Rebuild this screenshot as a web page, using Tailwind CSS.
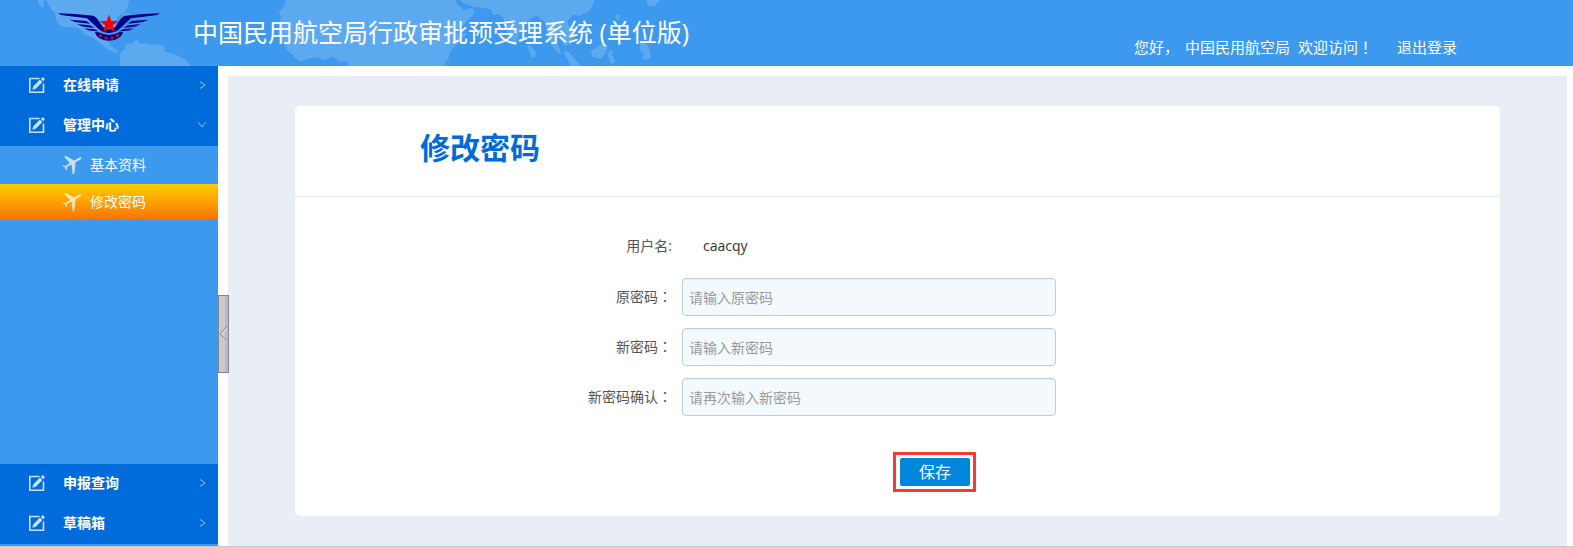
<!DOCTYPE html>
<html lang="zh-CN">
<head>
    <meta charset="UTF-8">
    <meta name="viewport" content="width=device-width, initial-scale=1.0">
    <title>中国民用航空局行政审批预受理系统 (单位版)</title>
    <script src="https://cdn.jsdelivr.net/npm/@tailwindcss/browser@4"></script>
</head>
<body class="flex flex-col min-h-screen bg-white border-b border-[#c8c8c8] font-['Open_Sans','Noto_Sans_CJK_SC',sans-serif] text-sm text-[#555]">

    <!-- shared icons -->
    <svg class="hidden">
        <symbol id="edit" viewBox="0 0 16 16">
            <path d="M10.500 1.500H.8v13.700h13.700V6.500" fill="none" stroke="currentColor" stroke-width="1.600"/>
            <path d="M3.300 12.700l1-3.500 6.600-6.600 2.500 2.500-6.600 6.600zM11.800 1.800l1.400-1.400q.8-.5 1.800.5t.5 1.800L14.200 4.200z" fill="currentColor"/>
        </symbol>
        <symbol id="plane" viewBox="0 0 20 20">
            <path d="M19.300 2.700c.4.900-.4 1.500-1.400 2l-4.300 2.600-1.200 11.500-1.700.6-1.100-9.800-4.600 2.400.1 2.600-1 .4-1.300-2.700L.3 11l.8-.7 2.500.7 4.300-2.900L2.200 1.900 3.700.8l8.500 4.600 4.300-2.500c1-.5 2.400-1.100 2.800-.2z" fill="currentColor"/>
        </symbol>
        <symbol id="right" viewBox="0 0 8 8">
            <path d="M2 .5L7 4 2 7.500" fill="none" stroke="currentColor"/>
        </symbol>
        <symbol id="down" viewBox="0 0 8 8">
            <path d="M.5 1.500L4 6l3.500-4.500" fill="none" stroke="currentColor"/>
        </symbol>
    </svg>

    <header class="relative flex h-[66px] shrink-0 bg-[#3c99ed] text-white overflow-hidden">
        <!-- world map backdrop -->
        <svg class="absolute left-0 top-0" width="700" height="66" viewBox="0 0 700 66" fill="#5ca9f0">
            <path d="M38 0l1 4 3 4 2-1-1-4 1-3z"/>
            <path d="M46 0l5 9 4 4 2 9 4 4 7 1 11 1 6 7 7 2 8 6 7 6 6 3 5 1-1-3-5-3-4-6-5-1-4-5 3-6 3-3 7-1 3 5 2-1-2-8 5-6 5-3 3-5 1-7z"/>
            <path d="M106 9l6-2 8 3 4 3-5 0-6-3-5 1zM122 14l6-1 3 2-5 3z"/>
            <path d="M120 66V53l4-3 2-6 7-1 4-4 3 5 6-1 4 2 8-1 6 2 1 6 7 1 6 3 8 4 5 6z"/>
            <path d="M286 0l-2 7-5 4 2 7-2 6-1 10 5 9 5 8 12 11 7-3 11-2 6 3 9-3 7 5 8-1v5h96l4-7 3-9 8-8 8-9-9 0-6-2-6-9-7-13-4-9-9-4z"/>
            <path d="M419 0l6 9 8 15 4 9 9 0 9-4 9-4 5-6 6-6-3-5-8 2-6-5-3-5z"/>
            <path d="M459 0l5 3 9 4 12 1 6 2 2 5 6-1 4 4 4 12 5 13 4 3 3-12 5-9 9-8 5-1 2 3 4 2 2 7 3 9 3 9 6 7 3 1-3-9-2-9 4 3 5 7 5-2 4-6-3-9-4-7 4-5 3-2 6 1 9-5 5-8V0z"/>
            <path d="M527 45l4 1 5 7-1 4-3 1-2-5zM563 51l6 1 8 9 3 5h-9zM591 51l12-8 5 3-3 8-5 5-8-2zM607 53l6-3-1 5 3 6-4 4-2-7zM640 43l5-1 4 6 2 8-3 4-6-2 2-4-4-4zM646 0l2 6 7 0 5-6zM615 17l3-3 2 3-2 4z"/>
        </svg>

        <!-- winged emblem -->
        <svg class="absolute left-[57px] top-3" width="104" height="30" viewBox="0 0 104 30">
            <path id="wing" d="M1 1.200Q18 1.200 36 3.700q3 1 5 4l5 7.500 6 2.300v3.500q-7-.5-11-4.500L30 6.200Q14 4.500 4 3zM12.500 7.800l17 1.200 3.500 2.800-15-1.800zM20 12l14 1.500 3.500 2.500-12-1.500zM27 16.200l11 1 4 2.300-10-1zM38 20.200l4 .3q10 5 20 0l4-.3q-3 8.300-14 8.300t-14-8.300z" fill="#00008b"/>
            <use href="#wing" transform="matrix(-1 0 0 1 104 0)"/>
            <path d="M52 2.500l2.300 6.500h7.200l-5.700 4.200 2.100 7-5.900-4.200-5.900 4.200 2.100-7-5.700-4.200h7.200z" fill="#f00"/>
            <g fill="#f00"><circle cx="43.500" cy="23.500" r="1.500"/><circle cx="49" cy="26" r="1.500"/><circle cx="55" cy="26" r="1.500"/><circle cx="60.500" cy="23.500" r="1.500"/></g>
        </svg>

        <h1 class="relative pl-[193px] text-[25px] leading-16 whitespace-nowrap">中国民用航空局行政审批预受理系统 (单位版)</h1>
        <div class="relative flex ml-auto pr-[116px] pt-[35px] text-[15px] leading-6 whitespace-nowrap">
            <span>您好，</span>
            <span class="ml-1.5">中国民用航空局</span>
            <span class="ml-2">欢迎访问<span class="font-['Noto_Sans_CJK_TC',sans-serif]" lang="zh-TW">！</span></span>
            <a href="#" class="ml-6">退出登录</a>
        </div>
    </header>

    <div class="flex flex-1">
        <nav class="relative flex flex-col w-[218px] shrink-0 bg-[#3c99ed] text-white pb-0.5">
            <a href="#" class="flex items-center h-10 pl-7 pr-3 pb-0.5 bg-[#006bdb] font-bold">
                <svg class="size-4 ml-px opacity-80"><use href="#edit"/></svg>
                <span class="ml-[18px]">在线申请</span>
                <svg class="size-2 ml-auto opacity-60"><use href="#right"/></svg>
            </a>
            <a href="#" class="flex items-center h-10 pl-7 pr-3 pb-0.5 bg-[#006bdb] font-bold">
                <svg class="size-4 ml-px opacity-80"><use href="#edit"/></svg>
                <span class="ml-[18px]">管理中心</span>
                <svg class="size-2 ml-auto opacity-60"><use href="#down"/></svg>
            </a>
            <div class="flex-1">
                <a href="#" class="flex items-center h-[38px] pl-[62px]">
                    <svg class="size-5 opacity-70"><use href="#plane"/></svg>
                    <span class="ml-2">基本资料</span>
                </a>
                <a href="#" class="flex items-center h-9 pl-[62px] bg-linear-to-b from-[#fc0] to-[#f67200]">
                    <svg class="size-5 opacity-70"><use href="#plane"/></svg>
                    <span class="ml-2">修改密码</span>
                </a>
            </div>
            <a href="#" class="flex items-center h-10 pl-7 pr-3 pb-0.5 bg-[#006bdb] font-bold">
                <svg class="size-4 ml-px opacity-80"><use href="#edit"/></svg>
                <span class="ml-[18px]">申报查询</span>
                <svg class="size-2 ml-auto opacity-60"><use href="#right"/></svg>
            </a>
            <a href="#" class="flex items-center h-10 pl-7 pr-3 pb-0.5 bg-[#006bdb] font-bold">
                <svg class="size-4 ml-px opacity-80"><use href="#edit"/></svg>
                <span class="ml-[18px]">草稿箱</span>
                <svg class="size-2 ml-auto opacity-60"><use href="#right"/></svg>
            </a>

            <!-- collapse handle -->
            <button type="button" aria-label="收起菜单" class="absolute left-full top-[229px] z-10 flex items-center w-[11px] h-[78px] border border-[#85858f] bg-linear-to-r from-[#cacaca] from-65% to-[#b8b9c2] to-65%">
                <svg width="9" height="18" viewBox="0 0 9 18" fill="none"><path d="M8 3L2 10l6 7" stroke="#e6e6e6"/><path d="M8 1L1 9l7 7" stroke="#8b8b93"/></svg>
            </button>
        </nav>

        <main class="flex-1 mt-2.5 ml-2.5 mr-1.5 py-[30px] bg-[#e9eef6]">
            <section class="mx-[5%] h-full pb-6 bg-white rounded-[5px]">
                <h2 class="h-[91px] pl-[125px] border-b border-[#e8ebee] text-3xl leading-[84px] font-bold text-[#006bdb]">修改密码</h2>
                <form class="pt-[31px]">
                    <div class="flex h-[50px]">
                        <span class="w-[377px] text-right leading-9">用户名:</span>
                        <span class="ml-[31px] leading-9 text-[#333]">caacqy</span>
                    </div>
                    <div class="flex h-[50px]">
                        <label for="oldPwd" class="w-[377px] text-right leading-9">原密码<span class="font-['Noto_Sans_CJK_TC',sans-serif]" lang="zh-TW">：</span></label>
                        <input type="password" id="oldPwd" placeholder="请输入原密码" class="ml-2.5 w-[374px] h-[38px] px-1.5 border border-[#bccfd8] rounded bg-[#f3f9fd] inset-shadow-xs placeholder:text-[#999]">
                    </div>
                    <div class="flex h-[50px]">
                        <label for="newPwd" class="w-[377px] text-right leading-9">新密码<span class="font-['Noto_Sans_CJK_TC',sans-serif]" lang="zh-TW">：</span></label>
                        <input type="password" id="newPwd" placeholder="请输入新密码" class="ml-2.5 w-[374px] h-[38px] px-1.5 border border-[#bccfd8] rounded bg-[#f3f9fd] inset-shadow-xs placeholder:text-[#999]">
                    </div>
                    <div class="flex h-[50px]">
                        <label for="newPwd2" class="w-[377px] text-right leading-9">新密码确认<span class="font-['Noto_Sans_CJK_TC',sans-serif]" lang="zh-TW">：</span></label>
                        <input type="password" id="newPwd2" placeholder="请再次输入新密码" class="ml-2.5 w-[374px] h-[38px] px-1.5 border border-[#bccfd8] rounded bg-[#f3f9fd] inset-shadow-xs placeholder:text-[#999]">
                    </div>
                    <div class="ml-[598px] mt-6 w-[83px] p-[3px] pl-1 border-3 border-[#fd3737]">
                        <button type="submit" class="block w-[70px] h-7 rounded-xs bg-[#0086dc] text-white text-base leading-7">保存</button>
                    </div>
                </form>
            </section>
        </main>
    </div>
</body>
</html>
